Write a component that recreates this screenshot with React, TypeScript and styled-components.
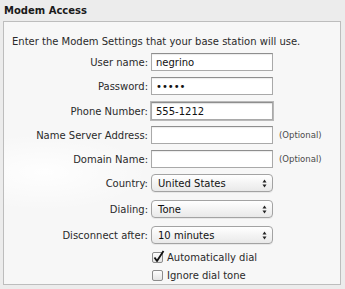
import React from "react";
import styled, { createGlobalStyle } from "styled-components";

const GlobalStyle = createGlobalStyle`
  body {
    margin: 0;
    background: #ececec;
    font-family: "DejaVu Sans", "Liberation Sans", sans-serif;
    color: #2a2a2a;
  }
`;

const Page = styled.div`
  width: 345px;
  height: 289px;
  padding: 4px 0 0 3px;
  box-sizing: border-box;
`;

const Title = styled.h2`
  margin: 0 0 4px 1px;
  font-size: 10px;
  line-height: 13px;
  font-weight: bold;
  color: #1a1a1a;
`;

const Box = styled.div`
  width: 338px;
  height: 264px;
  box-sizing: border-box;
  border: 1px solid #bdbdbd;
  background:
    radial-gradient(ellipse 150px 55px at 40px 150px, rgba(255, 255, 255, 0.9), rgba(255, 255, 255, 0) 70%),
    #f7f7f7;
  padding-top: 13px;
`;

const Intro = styled.p`
  margin: 0 0 4px 8px;
  font-size: 10px;
  line-height: 14px;
`;

const Row = styled.div<{ $mt?: number }>`
  display: grid;
  grid-template-columns: 144px auto;
  column-gap: 3px;
  align-items: center;
  margin-top: ${(p) => p.$mt ?? 0}px;
`;

const Label = styled.label`
  text-align: right;
  font-size: 10px;
  white-space: nowrap;
`;

const Field = styled.div`
  display: flex;
  align-items: center;
  gap: 6px;
`;

const Input = styled.input<{ $focus?: boolean }>`
  width: 122px;
  height: 18px;
  box-sizing: border-box;
  margin: 0;
  padding: 0 4px;
  border: 1px solid #a9a9a9;
  border-top-color: #8e8e8e;
  background: #fff;
  box-shadow: ${(p) =>
    p.$focus ? "0 0 0 1px #b9b9b9, inset 0 1px 1px rgba(0,0,0,0.12)" : "inset 0 1px 1px rgba(0,0,0,0.08)"};
  font-family: "DejaVu Sans", sans-serif;
  font-size: 10px;
  color: #111;
  outline: none;
`;

const Optional = styled.span`
  font-size: 8.5px;
  color: #4a4a4a;
`;

const Select = styled.div`
  width: 122px;
  height: 18px;
  box-sizing: border-box;
  border: 1px solid #a3a3a3;
  border-radius: 4px;
  background: linear-gradient(#ffffff, #f4f4f4 50%, #e9e9e9);
  box-shadow: 0 1px 0 rgba(0, 0, 0, 0.06);
  display: flex;
  align-items: center;
  justify-content: space-between;
  padding: 0 5px 0 6px;
  font-size: 10px;
  color: #111;
`;

const Check = styled.label`
  display: flex;
  align-items: center;
  gap: 4px;
  height: 16px;
  font-size: 10px;
  margin-left: 1px;
`;

const CheckBox = styled.span`
  position: relative;
  width: 11px;
  height: 11px;
  box-sizing: border-box;
  border: 1px solid #8c8c8c;
  border-radius: 2px;
  background: linear-gradient(#fdfdfd, #e4e4e4);
  svg {
    position: absolute;
    left: 0px;
    top: -3px;
  }
`;

const Arrows = () => (
  <svg width="5" height="9" viewBox="0 0 5 9">
    <path d="M2.5 0.5 L4.5 3.5 L0.5 3.5 Z" fill="#222" />
    <path d="M2.5 8.5 L4.5 5.5 L0.5 5.5 Z" fill="#222" />
  </svg>
);

const Tick = () => (
  <svg width="12" height="13" viewBox="0 0 12 13">
    <path d="M1.5 7.5 L4 11 L10.5 1" fill="none" stroke="#111" strokeWidth="1.8" strokeLinejoin="round" />
  </svg>
);

const SelectField = ({ value }: { value: string }) => (
  <Select>
    <span>{value}</span>
    <Arrows />
  </Select>
);

export default function App() {
  return (
    <Page>
      <GlobalStyle />
      <Title>Modem Access</Title>
      <Box>
        <Intro>Enter the Modem Settings that your base station will use.</Intro>
        <Row>
          <Label>User name:</Label>
          <Input defaultValue="negrino" />
        </Row>
        <Row $mt={6}>
          <Label>Password:</Label>
          <Input type="password" defaultValue="12345" />
        </Row>
        <Row $mt={7}>
          <Label>Phone Number:</Label>
          <Input $focus defaultValue="555-1212" />
        </Row>
        <Row $mt={6}>
          <Label>Name Server Address:</Label>
          <Field>
            <Input />
            <Optional>(Optional)</Optional>
          </Field>
        </Row>
        <Row $mt={6}>
          <Label>Domain Name:</Label>
          <Field>
            <Input />
            <Optional>(Optional)</Optional>
          </Field>
        </Row>
        <Row $mt={6}>
          <Label>Country:</Label>
          <SelectField value="United States" />
        </Row>
        <Row $mt={8}>
          <Label>Dialing:</Label>
          <SelectField value="Tone" />
        </Row>
        <Row $mt={8}>
          <Label>Disconnect after:</Label>
          <SelectField value="10 minutes" />
        </Row>
        <Row $mt={5}>
          <span />
          <Check>
            <CheckBox>
              <Tick />
            </CheckBox>
            Automatically dial
          </Check>
        </Row>
        <Row $mt={2}>
          <span />
          <Check>
            <CheckBox />
            Ignore dial tone
          </Check>
        </Row>
      </Box>
    </Page>
  );
}
